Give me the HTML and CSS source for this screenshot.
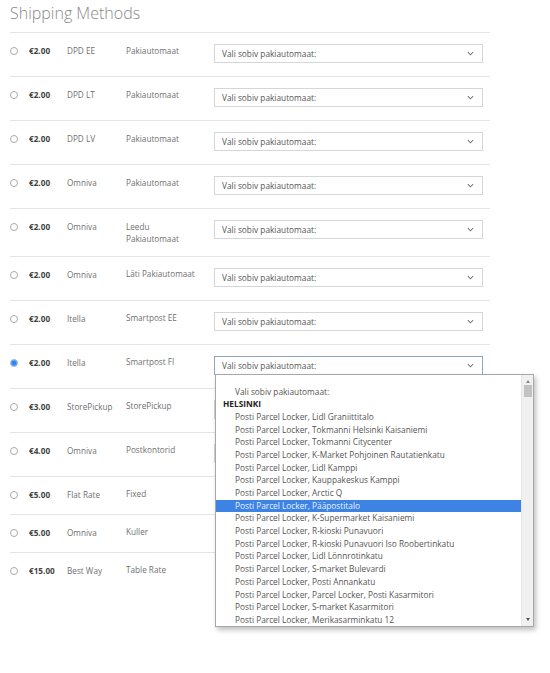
FILE: index.html
```html
<!DOCTYPE html>
<html>
<head>
<meta charset="utf-8">
<link rel="stylesheet" href="styles.css">
</head>
<body>
<div class="page">
  <h1 class="title">Shipping Methods</h1>
  <div class="methods">
    <div class="row">
      <span class="radio"></span><span class="price">€2.00</span><span class="carrier">DPD EE</span><span class="method">Pakiautomaat</span>
      <div class="select"><span class="select-text">Vali sobiv pakiautomaat:</span><svg class="chev" viewBox="0 0 8 5"><path d="M1 1 L4 4 L7 1" /></svg></div>
    </div>
    <div class="row">
      <span class="radio"></span><span class="price">€2.00</span><span class="carrier">DPD LT</span><span class="method">Pakiautomaat</span>
      <div class="select"><span class="select-text">Vali sobiv pakiautomaat:</span><svg class="chev" viewBox="0 0 8 5"><path d="M1 1 L4 4 L7 1" /></svg></div>
    </div>
    <div class="row">
      <span class="radio"></span><span class="price">€2.00</span><span class="carrier">DPD LV</span><span class="method">Pakiautomaat</span>
      <div class="select"><span class="select-text">Vali sobiv pakiautomaat:</span><svg class="chev" viewBox="0 0 8 5"><path d="M1 1 L4 4 L7 1" /></svg></div>
    </div>
    <div class="row">
      <span class="radio"></span><span class="price">€2.00</span><span class="carrier">Omniva</span><span class="method">Pakiautomaat</span>
      <div class="select"><span class="select-text">Vali sobiv pakiautomaat:</span><svg class="chev" viewBox="0 0 8 5"><path d="M1 1 L4 4 L7 1" /></svg></div>
    </div>
    <div class="row tall">
      <span class="radio"></span><span class="price">€2.00</span><span class="carrier">Omniva</span><span class="method">Leedu Pakiautomaat</span>
      <div class="select"><span class="select-text">Vali sobiv pakiautomaat:</span><svg class="chev" viewBox="0 0 8 5"><path d="M1 1 L4 4 L7 1" /></svg></div>
    </div>
    <div class="row">
      <span class="radio"></span><span class="price">€2.00</span><span class="carrier">Omniva</span><span class="method">Läti Pakiautomaat</span>
      <div class="select"><span class="select-text">Vali sobiv pakiautomaat:</span><svg class="chev" viewBox="0 0 8 5"><path d="M1 1 L4 4 L7 1" /></svg></div>
    </div>
    <div class="row">
      <span class="radio"></span><span class="price">€2.00</span><span class="carrier">Itella</span><span class="method">Smartpost EE</span>
      <div class="select"><span class="select-text">Vali sobiv pakiautomaat:</span><svg class="chev" viewBox="0 0 8 5"><path d="M1 1 L4 4 L7 1" /></svg></div>
    </div>
    <div class="row">
      <span class="radio checked"></span><span class="price">€2.00</span><span class="carrier">Itella</span><span class="method">Smartpost FI</span>
      <div class="select open"><span class="select-text">Vali sobiv pakiautomaat:</span><svg class="chev" viewBox="0 0 8 5"><path d="M1 1 L4 4 L7 1" /></svg>
        <div class="dropdown">
          <div class="options">
            <div class="opt">Vali sobiv pakiautomaat:</div>
            <div class="group">HELSINKI</div>
            <div class="opt">Posti Parcel Locker, Lidl Graniittitalo</div>
            <div class="opt">Posti Parcel Locker, Tokmanni Helsinki Kaisaniemi</div>
            <div class="opt">Posti Parcel Locker, Tokmanni Citycenter</div>
            <div class="opt">Posti Parcel Locker, K-Market Pohjoinen Rautatienkatu</div>
            <div class="opt">Posti Parcel Locker, Lidl Kamppi</div>
            <div class="opt">Posti Parcel Locker, Kauppakeskus Kamppi</div>
            <div class="opt">Posti Parcel Locker, Arctic Q</div>
            <div class="opt hl">Posti Parcel Locker, Pääpostitalo</div>
            <div class="opt">Posti Parcel Locker, K-Supermarket Kaisaniemi</div>
            <div class="opt">Posti Parcel Locker, R-kioski Punavuori</div>
            <div class="opt">Posti Parcel Locker, R-kioski Punavuori Iso Roobertinkatu</div>
            <div class="opt">Posti Parcel Locker, Lidl Lönnrotinkatu</div>
            <div class="opt">Posti Parcel Locker, S-market Bulevardi</div>
            <div class="opt">Posti Parcel Locker, Posti Annankatu</div>
            <div class="opt">Posti Parcel Locker, Parcel Locker, Posti Kasarmitori</div>
            <div class="opt">Posti Parcel Locker, S-market Kasarmitori</div>
            <div class="opt">Posti Parcel Locker, Merikasarminkatu 12</div>
          </div>
          <div class="scrollbar">
            <span class="arrow up"></span>
            <span class="thumb"></span>
            <span class="track"></span>
            <span class="arrow down"></span>
          </div>
        </div>
      </div>
    </div>
    <div class="row">
      <span class="radio"></span><span class="price">€3.00</span><span class="carrier">StorePickup</span><span class="method">StorePickup</span>
      <div class="select"></div>
    </div>
    <div class="row">
      <span class="radio"></span><span class="price">€4.00</span><span class="carrier">Omniva</span><span class="method">Postkontorid</span>
      <div class="select"></div>
    </div>
    <div class="row">
      <span class="radio"></span><span class="price">€5.00</span><span class="carrier">Flat Rate</span><span class="method">Fixed</span>
    </div>
    <div class="row">
      <span class="radio"></span><span class="price">€5.00</span><span class="carrier">Omniva</span><span class="method">Kuller</span>
    </div>
    <div class="row">
      <span class="radio"></span><span class="price">€15.00</span><span class="carrier">Best Way</span><span class="method">Table Rate</span>
    </div>
  </div>
</div>
</body>
</html>
```

FILE: styles.css
```css
* { box-sizing: border-box; }
html, body { margin: 0; padding: 0; background: #fff; }
body {
  font-family: "Open Sans", "Noto Sans", "Liberation Sans", sans-serif;
  color: #666;
  min-height: 673px;
}
.page { width: 480px; margin-left: 10px; padding-bottom: 90px; }
.title {
  margin: 0;
  height: 32px;
  padding-top: 2px;
  font-size: 16px;
  line-height: 22px;
  font-weight: 300;
  color: #888;
}
.row {
  display: grid;
  grid-template-columns: 19px 38px 59px 88px 269px;
  align-items: start;
  border-top: 1px solid #e4e4e4;
  padding: 11px 0 13px;
  font-size: 8.2px;
  line-height: 13px;
}
.row.tall { padding-bottom: 11px; }
.radio {
  display: block;
  width: 8px;
  height: 8px;
  margin-top: 3px;
  border: 1px solid #aaa;
  border-radius: 50%;
  background: #fff;
}
.radio.checked {
  border-color: #9ec3f5;
  background: #2f7fe6;
  box-shadow: inset 0 0 0 1px #5d9cf0;
}
.price { font-weight: 700; color: #444; }
.carrier { color: #707070; }
.method { color: #707070; padding-right: 12px; line-height: 12px; padding-top: 0.5px; }
.select {
  position: relative;
  height: 19px;
  border: 1px solid #d6d6d6;
  background: #fff;
  display: flex;
  align-items: center;
  justify-content: space-between;
  padding: 0 8px 0 7px;
  color: #555;
}
.select.open { border-color: #8ea4bf; }
.select-text { font-size: 8.3px; line-height: 13px; }
.chev { width: 7px; height: 5px; fill: none; stroke: #777; stroke-width: 1.2; }
.dropdown {
  position: absolute;
  top: 100%;
  left: 0;
  width: 319px;
  height: 253px;
  border: 1px solid #a8a8a8;
  background: #fff;
  box-shadow: 2px 3px 5px rgba(0, 0, 0, 0.25);
  display: flex;
  z-index: 10;
}
.options {
  flex: 1;
  overflow: hidden;
  padding-top: 11px;
  font-size: 8.3px;
  line-height: 12.7px;
  color: #555;
}
.opt { padding-left: 19px; white-space: nowrap; height: 12.7px; }
.group { padding-left: 7px; font-weight: 700; color: #222; height: 12.7px; }
.opt.hl { background: #3c83e4; color: #eaf2ff; }
.scrollbar {
  width: 12px;
  background: #f0f0f0;
  border-left: 1px solid #e6e6e6;
  display: flex;
  flex-direction: column;
  align-items: center;
}
.arrow { width: 0; height: 0; border-left: 2.5px solid transparent; border-right: 2.5px solid transparent; }
.arrow.up { margin-top: 5px; border-bottom: 3px solid #888; }
.arrow.down { margin-bottom: 5px; border-top: 3px solid #555; }
.thumb { width: 8px; height: 12px; margin-top: 2px; background: #c2c2c2; }
.track { flex: 1; }
```
